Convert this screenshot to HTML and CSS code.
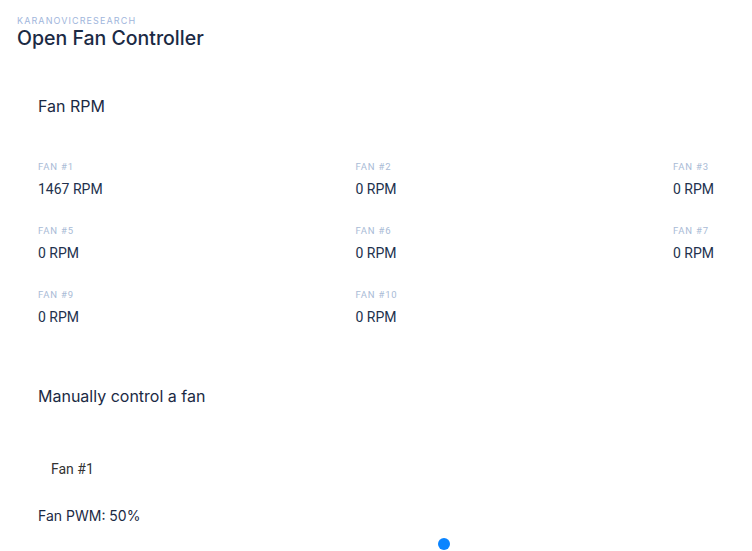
FILE: index.html
```html
<!DOCTYPE html>
<html lang="en">
<head>
    <meta charset="UTF-8">
    <meta name="viewport" content="width=device-width, initial-scale=1.0">
    <title>Open Fan Controller</title>
    <link rel="stylesheet" href="styles.css">
</head>
<body>
    <header class="top">
        <div class="brand">KARANOVICRESEARCH</div>
        <h1>Open Fan Controller</h1>
    </header>
    <main class="content">
        <section class="panel">
            <h2>Fan RPM</h2>
            <div class="fan-grid">
                <div class="fan"><span class="fan-label">FAN #1</span><span class="fan-rpm">1467 RPM</span></div>
                <div class="fan"><span class="fan-label">FAN #2</span><span class="fan-rpm">0 RPM</span></div>
                <div class="fan"><span class="fan-label">FAN #3</span><span class="fan-rpm">0 RPM</span></div>
                <div class="fan"><span class="fan-label">FAN #4</span><span class="fan-rpm">0 RPM</span></div>
                <div class="fan"><span class="fan-label">FAN #5</span><span class="fan-rpm">0 RPM</span></div>
                <div class="fan"><span class="fan-label">FAN #6</span><span class="fan-rpm">0 RPM</span></div>
                <div class="fan"><span class="fan-label">FAN #7</span><span class="fan-rpm">0 RPM</span></div>
                <div class="fan"><span class="fan-label">FAN #8</span><span class="fan-rpm">0 RPM</span></div>
                <div class="fan"><span class="fan-label">FAN #9</span><span class="fan-rpm">0 RPM</span></div>
                <div class="fan"><span class="fan-label">FAN #10</span><span class="fan-rpm">0 RPM</span></div>
            </div>
        </section>
        <section class="panel manual">
            <h2>Manually control a fan</h2>
            <div class="fan-select">Fan #1</div>
            <div class="pwm-label">Fan PWM: 50%</div>
            <div class="slider">
                <span class="thumb"></span>
            </div>
        </section>
    </main>
</body>
</html>
```

FILE: styles.css
```css
html, body {
    overflow: hidden;
}
body {
    margin: 0;
    font-family: Inter, "Noto Sans", sans-serif;
    color: #1d2b3f;
    background: #fff;
    width: 1320px;
}
.top {
    padding: 15px 17px 0;
}
.brand {
    font-size: 9px;
    letter-spacing: 1.1px;
    color: #9fb6dc;
    line-height: 11px;
}
.top h1 {
    margin: 0;
    font-size: 19.5px;
    font-weight: 500;
    line-height: 24px;
    color: #1b2a44;
}
.content {
    padding: 0 38px;
}
.panel h2 {
    margin: 0;
    font-size: 16px;
    font-weight: 400;
    line-height: 20px;
    color: #1b2a44;
}
.panel:first-child h2 {
    margin-top: 46px;
}
.fan-grid {
    display: grid;
    grid-template-columns: repeat(4, 317.5px);
    row-gap: 25px;
    margin-top: 45px;
}
.fan {
    display: flex;
    flex-direction: column;
    gap: 5px;
}
.fan-label {
    font-family: Roboto, sans-serif;
    font-size: 9.5px;
    letter-spacing: 0.8px;
    line-height: 12px;
    color: #a9bbd6;
}
.fan-rpm {
    font-family: Roboto, sans-serif;
    font-size: 14px;
    line-height: 22px;
    color: #22314d;
}
.manual h2 {
    margin-top: 58px;
}
.fan-select {
    margin-top: 53px;
    padding-left: 13px;
    font-family: Roboto, sans-serif;
    font-size: 14px;
    line-height: 20px;
    color: #333;
}
.pwm-label {
    margin-top: 27px;
    font-size: 14px;
    line-height: 20px;
    color: #1b2a44;
}
.slider {
    position: relative;
    width: 812px;
    height: 12px;
    margin-top: 12px;
}
.thumb {
    position: absolute;
    left: 400px;
    top: 0;
    width: 12px;
    height: 12px;
    border-radius: 50%;
    background: #0a84ff;
}
```
